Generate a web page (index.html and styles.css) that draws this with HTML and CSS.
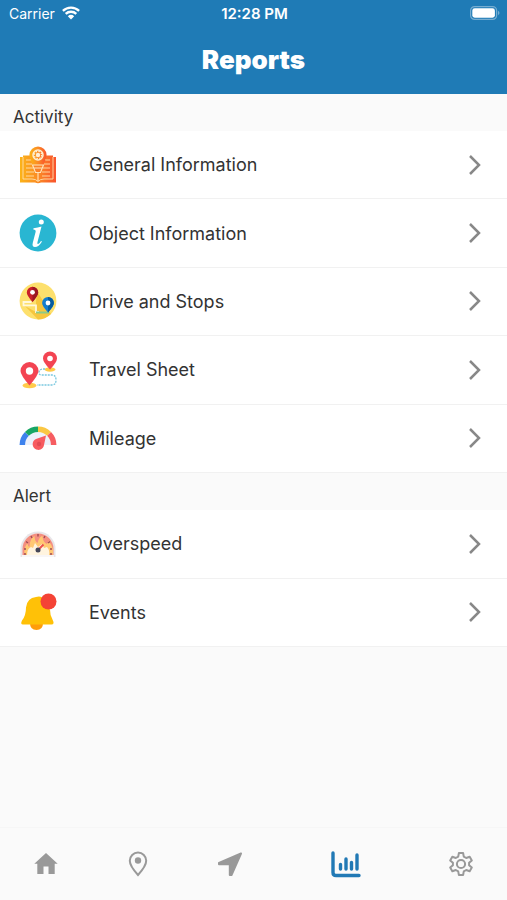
FILE: index.html
```html
<!DOCTYPE html>
<html lang="en">
<head>
<meta charset="utf-8">
<meta name="viewport" content="width=device-width, initial-scale=1">
<title>Reports</title>
<link rel="stylesheet" href="styles.css">
</head>
<body>
<div class="app">
  <header class="header">
    <div class="status">
      <div class="carrier">
        <span>Carrier</span>
        <svg width="18" height="14" viewBox="0 0 18 14" fill="none" stroke="#fff" stroke-width="2.3" aria-hidden="true">
          <path d="M.9 4.9a11.6 11.6 0 0 1 16.2 0M3.7 7.9a7.6 7.6 0 0 1 10.6 0"/>
          <path d="M5.8 10.3a4.7 4.7 0 0 1 6.4 0L9 13.6z" fill="#fff" stroke="none"/>
        </svg>
      </div>
      <span class="time">12:28 PM</span>
      <svg class="battery" width="30" height="14" viewBox="0 0 30 14" aria-hidden="true">
        <rect x=".6" y=".6" width="26" height="12.8" rx="4" fill="none" stroke="#76add1" stroke-width="1.2"/>
        <rect x="2.3" y="2.3" width="22.6" height="9.4" rx="2.4" fill="#fff"/>
        <path d="M28 4.8q3 2.2 0 4.4z" fill="#76add1"/>
      </svg>
    </div>
    <h1 class="title">Reports</h1>
  </header>

  <main class="content">
    <section>
      <h2 class="label">Activity</h2>
      <ul class="list five">
        <li><a class="row" href="#general">
          <svg class="icon" viewBox="0 0 38 38" aria-hidden="true">
            <defs><linearGradient id="book"><stop stop-color="#fbb318"/><stop offset=".5" stop-color="#fb8b25"/><stop offset="1" stop-color="#f9532d"/></linearGradient></defs>
            <path d="M1 11h3v-1.500h8l7 4 7-4h8V11h3v25.500H22q-3 1.500-6 0H1z" fill="url(#book)"/>
            <path d="M4 11v22h9q4 0 6 2.500Q21 33 25 33h9V11M7 14h5M7 18h6M7 22h7M7 26h8M7 30h8M26 14h5M25 18h6M24 22h7M23 26h8M23 30h8" fill="none" stroke="#ffe0ac" stroke-width=".9"/>
            <circle cx="19" cy="9" r="8.600" fill="url(#book)"/>
            <path d="m11.500 14 4 8h7l4-8" fill="url(#book)"/>
            <path d="M13.500 19h11l-3 7.500h-5zM14.500 22h9M19 26v9" fill="#f98229" stroke="#ffe5bd" stroke-width="1.100"/>
            <circle cx="19" cy="9" r="5" fill="none" stroke="#fff0cf" stroke-width="1.500"/>
            <circle cx="19" cy="9" r="3.700" fill="none" stroke="#fff0d7" stroke-width="1.200" stroke-dasharray="1.500 1.400"/>
            <circle cx="19" cy="9" r="2.200" fill="#fff0d7"/>
          </svg>
          <span class="name">General Information</span><svg class="chevron" viewBox="0 0 14 22" aria-hidden="true"><path d="m2 2 9 9-9 9"/></svg></a></li>
        <li><a class="row" href="#object">
          <svg class="icon" viewBox="0 0 38 38" aria-hidden="true">
            <circle cx="19" cy="19" r="18.400" fill="#29b6d2"/>
            <circle cx="22.300" cy="8" r="2.500" fill="#fff"/>
            <path d="M14.500 14.200q4.500-.2 8-1.600l-4 15.300q-.6 2.500.7 2 1.400-.7 2.800-3l1 .7q-3.300 5.500-7 5.500-3.300-.2-2.200-4.300l2.800-10.800q.6-2.300-2.300-2.400z" fill="#fff"/>
          </svg>
          <span class="name">Object Information</span><svg class="chevron" viewBox="0 0 14 22" aria-hidden="true"><path d="m2 2 9 9-9 9"/></svg></a></li>
        <li><a class="row" href="#drive">
          <svg class="icon" viewBox="0 0 38 38" aria-hidden="true">
            <circle cx="19" cy="19" r="18.400" fill="#fde06d"/>
            <path d="m18 9 14 23q-6 5.500-13 5.500L6 24l11 6V20z" fill="#f6c63e"/>
            <path d="M12.500 20H4.500v3.300H17V30h3" fill="none" stroke="#fff8dc" stroke-width="1.800"/>
            <path d="M17 30.500h13" stroke="#8ccb86" stroke-width="2"/>
            <path d="M13.500 20Q7.800 13.500 7.800 10.500a5.700 5.700 0 1 1 11.400 0q0 3-5.700 9.500" fill="#c91f29"/>
            <path d="M13.500 4.800a5.700 5.700 0 0 1 5.700 5.700q0 3-5.700 9.500z" fill="#9c1721"/>
            <circle cx="13.500" cy="10.300" r="2.400" fill="#fff"/>
            <path d="M29 30.500q-5.900-6.500-5.900-9.500a5.900 5.900 0 1 1 11.800 0q0 3-5.900 9.500" fill="#147dce"/>
            <path d="M29 15.100a5.900 5.900 0 0 1 5.900 5.900q0 3-5.900 9.500z" fill="#075c9f"/>
            <circle cx="29" cy="21" r="2.400" fill="#fff"/>
          </svg>
          <span class="name">Drive and Stops</span><svg class="chevron" viewBox="0 0 14 22" aria-hidden="true"><path d="m2 2 9 9-9 9"/></svg></a></li>
        <li><a class="row" href="#travel">
          <svg class="icon" viewBox="0 0 38 38" aria-hidden="true">
            <ellipse cx="10.500" cy="34.500" rx="7" ry="2.800" fill="#ffcb4b"/>
            <ellipse cx="31" cy="18.500" rx="5.500" ry="2.200" fill="#ffcb4b"/>
            <path d="M26 18h-3q-3 1-3 3.500t3 2.500h10q4 0 4 5t-4 5H18" fill="none" stroke="#79c8df" stroke-width="1.300" stroke-dasharray="2 1"/>
            <path d="M10.500 34.500Q1.500 24 1.500 20a9 9 0 0 1 18 0q0 4-9 14.500" fill="#f34452"/>
            <circle cx="10.500" cy="20" r="3.700" fill="#fff"/>
            <path d="M31 18.500Q24 11 24 7.500a7 7 0 0 1 14 0q0 3.500-7 11" fill="#f34452"/>
            <circle cx="31" cy="7.500" r="2.800" fill="#fff"/>
          </svg>
          <span class="name">Travel Sheet</span><svg class="chevron" viewBox="0 0 14 22" aria-hidden="true"><path d="m2 2 9 9-9 9"/></svg></a></li>
        <li><a class="row" href="#mileage">
          <svg class="icon" viewBox="0 3 38 38" aria-hidden="true">
            <path d="M6 29a13 13 0 0 1 26 0z" fill="#edf1fb"/>
            <g fill="none" stroke-width="5.500">
              <path d="M3.300 29A15.700 15.700 0 0 1 7.900 17.900" stroke="#3e82ed"/>
              <path d="M7.900 17.900A15.700 15.700 0 0 1 19 13.300" stroke="#18a665"/>
              <path d="M19 13.300A15.700 15.700 0 0 1 30.100 17.900" stroke="#fac744"/>
              <path d="M30.100 17.900A15.700 15.700 0 0 1 34.700 29" stroke="#f65d61"/>
            </g>
            <path d="M27 19.500 25 29a5.700 5.700 0 1 1-8-6z" fill="#f75b60"/>
            <circle cx="20" cy="28" r="2.200" fill="#e24b54"/>
          </svg>
          <span class="name">Mileage</span><svg class="chevron" viewBox="0 0 14 22" aria-hidden="true"><path d="m2 2 9 9-9 9"/></svg></a></li>
      </ul>
    </section>
    <section>
      <h2 class="label">Alert</h2>
      <ul class="list two">
        <li><a class="row" href="#overspeed">
          <svg class="icon" viewBox="0 0 38 38" aria-hidden="true">
            <path d="M1.500 32V24a17.500 17.500 0 0 1 35 0v8z" fill="#e8e5e8"/>
            <path d="M3.500 30v-6a15.500 15.500 0 0 1 31 0v6z" fill="#f58f80"/>
            <path d="M5.500 30q-1-7 3-12 0 3 2 4 0-8 5-11 0 5 3 7 2-7 5-7 0 5 4 8 2-1 2-3 6 7 4 14z" fill="#ffc873"/>
            <path d="M8 30q0-6 4-8l2 1 2-5 3 4 4-3 2 4 3-1q3 3 2 8z" fill="#fff4df"/>
            <path d="M3 30h32v2H3z" fill="#f8f6f6"/>
            <path d="M5 24h2M7 16.500l2 1.500M12 11l1 2M19 9v2.500M26 11l-1 2M31 16.500 29 18M33 24h-2M5 29h2M31 29h2" stroke="#a04c56" stroke-width="1.400"/>
            <path d="m19 25 5.500-5.500" stroke="#ee514d" stroke-width="2"/>
            <circle cx="19" cy="25" r="2.500" fill="#454657"/>
          </svg>
          <span class="name">Overspeed</span><svg class="chevron" viewBox="0 0 14 22" aria-hidden="true"><path d="m2 2 9 9-9 9"/></svg></a></li>
        <li><a class="row" href="#events">
          <svg class="icon" viewBox="0 0 38 38" aria-hidden="true">
            <path d="M11 30h13q0 7-6.500 7T11 30" fill="#ff9d0a"/>
            <path d="M17 4q4-1 6 .5 0 9 8 12 0 6 2.500 10 2.500 5-1 5H4q-3 0-1-4 4-5 4-13Q8 5 17 4" fill="#ffc107"/>
            <circle cx="29.500" cy="8.500" r="8" fill="#f44336"/>
          </svg>
          <span class="name">Events</span><svg class="chevron" viewBox="0 0 14 22" aria-hidden="true"><path d="m2 2 9 9-9 9"/></svg></a></li>
      </ul>
    </section>
  </main>

  <nav class="tabs" aria-label="Main">
    <a href="#home" aria-label="Home"><svg width="28" height="28" viewBox="0 0 28 28" fill="#999" aria-hidden="true"><path d="M14 3 2.300 13.800h3V24h6.200v-7.500h5V24h6.200V13.800h3z"/></svg></a>
    <a href="#map" aria-label="Map"><svg width="28" height="28" viewBox="0 0 28 28" aria-hidden="true"><path d="M14 25Q5.800 16 5.800 10.800a8.200 8.200 0 0 1 16.400 0Q22.200 16 14 25z" fill="none" stroke="#999" stroke-width="2"/><circle cx="14" cy="10.500" r="3.200" fill="#999"/></svg></a>
    <a href="#track" aria-label="Track"><svg width="28" height="28" viewBox="0 0 28 28" fill="#999" stroke="#999" stroke-width="2" stroke-linejoin="round" aria-hidden="true"><path d="M25 3.500 3 12.800v1.400h10.800V25h1.700z"/></svg></a>
    <a class="active" href="#reports" aria-label="Reports" aria-current="page"><svg width="32" height="28" viewBox="0 0 32 28" fill="none" stroke="#2179b5" stroke-width="3.400" stroke-linecap="round" stroke-linejoin="round" aria-hidden="true"><path d="M3 3v19.500q0 3 3 3h23M10.500 14.500v4.500M16 9v10M21.500 12.500v6.500M27 5v14"/></svg></a>
    <a href="#settings" aria-label="Settings"><svg width="28" height="28" viewBox="0 0 28 28" fill="none" stroke="#999" stroke-width="2" stroke-linejoin="round" aria-hidden="true"><path d="M11.900 3h4.200l.7 3.600 2.400 1.400 3.500-1.200 2.100 3.600-2.700 2.400v2.400l2.700 2.400-2.100 3.600-3.500-1.200-2.400 1.400-.7 3.600h-4.200l-.7-3.600L8.800 20l-3.500 1.200-2.100-3.600 2.700-2.400v-2.400l-2.700-2.400 2.100-3.600L8.800 8l2.400-1.400z"/><circle cx="14" cy="14" r="4.100"/></svg></a>
  </nav>
</div>
</body>
</html>
```
FILE: styles.css
```css
* { box-sizing: border-box; }

body {
  margin: 0;
  font-family: Inter, "Liberation Sans", sans-serif;
  color: #333;
  background: #fafafa;
}

.app {
  display: flex;
  flex-direction: column;
  min-height: 100vh;
}

.header {
  height: 94px;
  color: #fff;
  background: #1f7bb6;
}

.status {
  display: grid;
  grid-template-columns: 1fr auto 1fr;
  align-items: center;
  height: 26px;
  padding: 0 7px 0 9px;
  font-size: 14px;
}

.carrier {
  display: flex;
  align-items: center;
  gap: 7px;
}

.time {
  font-size: 15px;
  font-weight: 600;
}

.battery { justify-self: end; }

.title {
  margin: 0;
  font-size: 26px;
  font-weight: 900;
  line-height: 68px;
  text-align: center;
}

.content { flex: 1; }

.label {
  display: flex;
  align-items: center;
  height: 37px;
  margin: 0;
  padding: 8px 13px 0;
  font-size: 17px;
  font-weight: 400;
}

.list {
  display: grid;
  grid-auto-rows: 1fr;
  margin: 0;
  padding: 0;
  list-style: none;
  background: #fff;
}

.five { min-height: 342px; }

.two { min-height: 137px; }

.row {
  display: flex;
  align-items: center;
  height: 100%;
  padding: 0 25px 0 19px;
  border-bottom: 1px solid #f1f1f1;
  color: inherit;
  text-decoration: none;
}

.icon {
  flex: none;
  width: 38px;
  height: 38px;
  margin-right: 32px;
}

.name {
  flex: 1;
  font-size: 18px;
}

.chevron {
  width: 14px;
  height: 22px;
  fill: none;
  stroke: #888;
  stroke-width: 2.5;
}

.tabs {
  display: flex;
  height: 73px;
  border-top: 1px solid #f6f6f6;
}

.tabs a {
  flex: 2;
  display: flex;
  align-items: center;
  justify-content: center;
}

.tabs .active { flex: 3; }
```
